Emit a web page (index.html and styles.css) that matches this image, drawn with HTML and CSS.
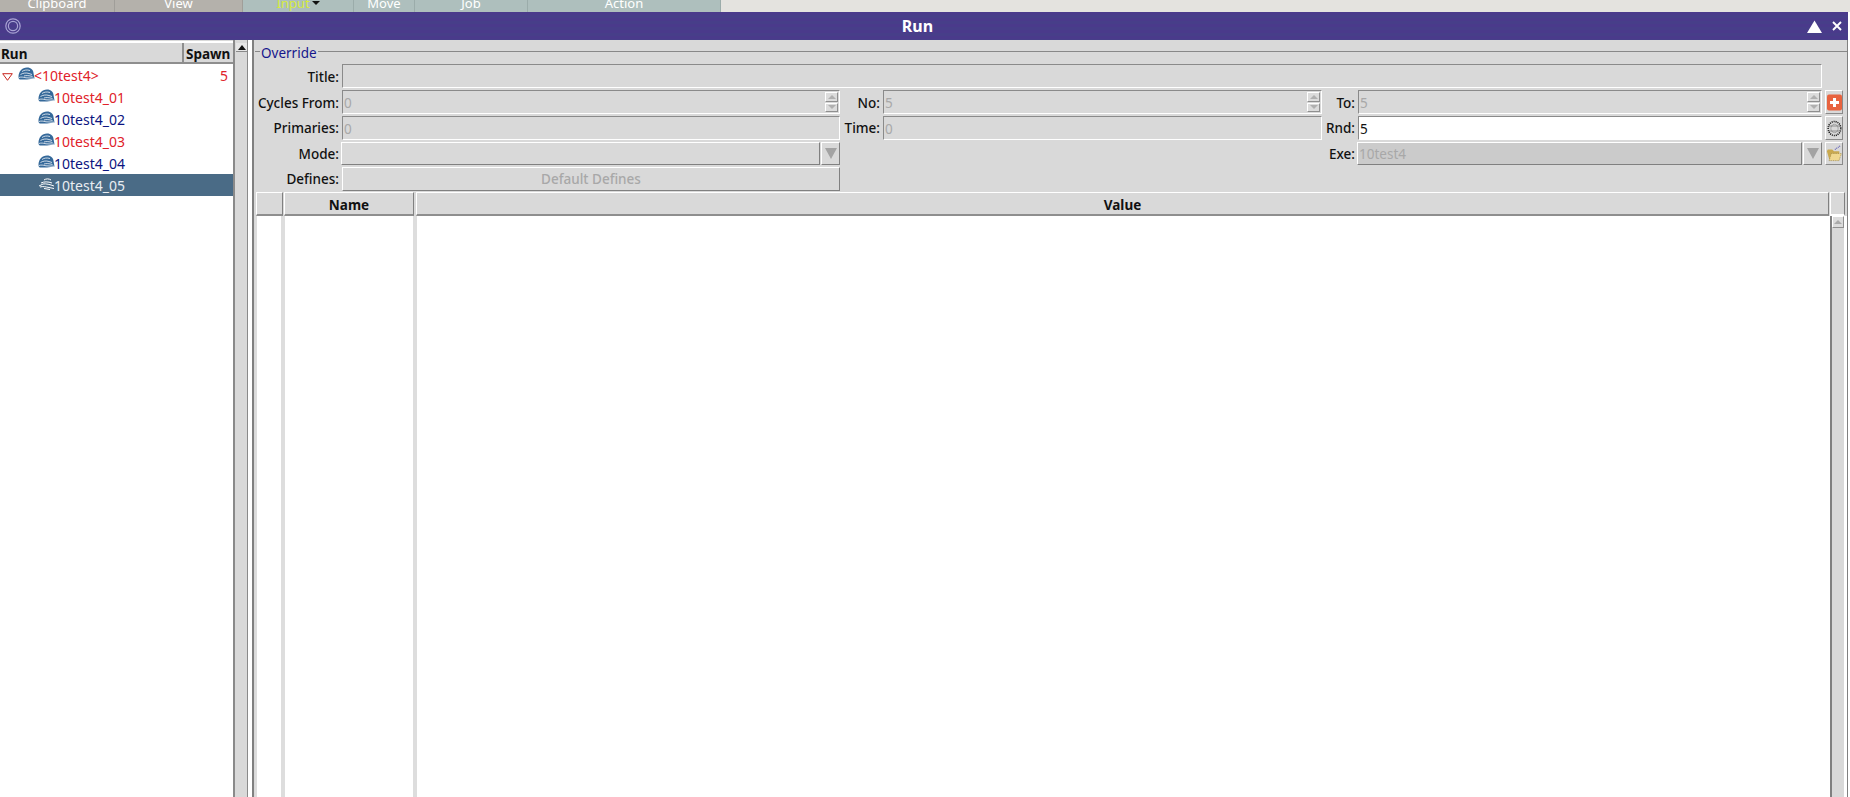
FILE: index.html
```html
<!DOCTYPE html>
<html lang="en">
<head>
<meta charset="utf-8">
<title>Run</title>
<link rel="stylesheet" href="styles.css">
</head>
<body>
<svg class="defs" width="0" height="0" aria-hidden="true">
  <symbol id="brain" viewBox="0 0 17 13">
    <path d="M0.5 10 C0.5 4.5 4 0.5 9 0.5 C13 0.5 15.5 3 15.5 6 L16.5 11.5 L9 12.5 L2 12.5 C1 12.5 0.5 11 0.5 10 Z" fill="currentColor"/>
    <path d="M4 4.5 C6 3 9 2.5 12 3.5 M2.5 7.5 C5 6 8 5.5 11 6.5 L14 7.5 M6 9 C8 8.3 11 8.5 14.5 9.5 M1 10.5 C3 9.8 5 10 8 10.8 L16 11.2" fill="none" stroke="#fff" stroke-width="0.75"/>
  </symbol>
  <symbol id="brain-thin" viewBox="0 0 17 13">
    <path d="M6 3 C8 1.5 11 1.5 13 3 M3 6 C6 4.5 10 4.5 14 6 M1 9 L5 7 C8 6.5 12 7.5 16 9 M2 10 C5 9 8 10 11 10.5 L16 11.5 M6 11.5 L12 12.5" fill="none" stroke="#fff" stroke-width="1"/>
  </symbol>
</svg>

<nav class="tabs">
  <div class="tab tab-clip">Clipboard</div>
  <div class="tab tab-view">View</div>
  <div class="tab tab-input tab-cool"><span class="tab-hot">Input</span><span class="tab-caret"></span></div>
  <div class="tab tab-move tab-cool">Move</div>
  <div class="tab tab-job tab-cool">Job</div>
  <div class="tab tab-action tab-cool">Action</div>
</nav>

<header class="titlebar">
  <svg class="win-icon" width="18" height="18" viewBox="0 0 18 18"><circle cx="9" cy="9" r="7.2" fill="none" stroke="#a9a3d4" stroke-width="1.2"/><circle cx="9" cy="9" r="4.6" fill="none" stroke="#a9a3d4" stroke-width="1.2"/></svg>
  <div class="win-title">Run</div>
  <svg class="win-btn" width="15" height="13" viewBox="0 0 15 13"><path d="M7.5 0.5 L15 13 L0 13 Z" fill="#fff"/></svg>
  <svg class="win-btn win-close" width="10" height="10" viewBox="0 0 10 10"><path d="M1 1 L9 9 M9 1 L1 9" stroke="#fff" stroke-width="1.9"/></svg>
</header>

<main class="main">
  <section class="left">
    <div class="left-head">
      <div class="lh-run">Run</div>
      <div class="lh-spawn">Spawn</div>
    </div>
    <ul class="tree">
      <li class="node root red"><svg class="twisty" width="11" height="8" viewBox="0 0 11 8"><path d="M0.7 0.7 H10.3 L5.5 7.3 Z" fill="#fff" stroke="#c8261f" stroke-width="1"/></svg><svg class="brain"><use href="#brain"/></svg><span class="node-name">&lt;10test4&gt;</span><span class="node-count">5</span></li>
      <li class="node child red"><svg class="brain"><use href="#brain"/></svg><span class="node-name">10test4_01</span></li>
      <li class="node child navy"><svg class="brain"><use href="#brain"/></svg><span class="node-name">10test4_02</span></li>
      <li class="node child red"><svg class="brain"><use href="#brain"/></svg><span class="node-name">10test4_03</span></li>
      <li class="node child navy"><svg class="brain"><use href="#brain"/></svg><span class="node-name">10test4_04</span></li>
      <li class="node child selected"><svg class="brain"><use href="#brain-thin"/></svg><span class="node-name">10test4_05</span></li>
    </ul>
  </section>

  <div class="vscroll-left"><div class="sb-up"><span class="tri-black"></span></div></div>
  <div class="splitter"></div>

  <section class="right">
    <div class="legend"><span class="legend-text">Override</span></div>
    <div class="form">
      <label class="lbl lbl-low">Title:</label>
      <div class="field span-5"></div>
      <div class="blank"></div>

      <label class="lbl lbl-low">Cycles From:</label>
      <div class="field"><span class="val">0</span><span class="spin"><i class="spin-u"></i><i class="spin-d"></i></span></div>
      <label class="lbl lbl-low">No:</label>
      <div class="field"><span class="val">5</span><span class="spin"><i class="spin-u"></i><i class="spin-d"></i></span></div>
      <label class="lbl lbl-low">To:</label>
      <div class="field"><span class="val">5</span><span class="spin"><i class="spin-u"></i><i class="spin-d"></i></span></div>
      <button class="tool"><svg width="15" height="17" viewBox="0 0 15 17"><rect x="0" y="0.5" width="15" height="16" rx="2" fill="#e8633f"/><path d="M7.5 4 V13 M3 8.5 H12" stroke="#fff" stroke-width="3"/></svg></button>

      <label class="lbl">Primaries:</label>
      <div class="field"><span class="val">0</span></div>
      <label class="lbl">Time:</label>
      <div class="field"><span class="val">0</span></div>
      <label class="lbl">Rnd:</label>
      <div class="field field-on"><span class="val val-on">5</span></div>
      <button class="tool"><svg width="15" height="17" viewBox="0 0 15 17"><ellipse cx="7.5" cy="8.5" rx="6.3" ry="7" fill="none" stroke="#111" stroke-width="1.6" stroke-dasharray="1 1"/><ellipse cx="7.5" cy="8.5" rx="3.6" ry="4.2" fill="none" stroke="#777" stroke-width="1" stroke-dasharray="1 1"/><path d="M1.5 6 H13.5 M1.5 11 H13.5" stroke="#444" stroke-width="1" stroke-dasharray="1 1"/></svg></button>

      <label class="lbl">Mode:</label>
      <div class="combo"><div class="combo-box"></div><div class="combo-arrow"><span class="tri-gray"></span></div></div>
      <div class="blank"></div>
      <div class="blank"></div>
      <label class="lbl">Exe:</label>
      <div class="combo"><div class="combo-box combo-dark"><span class="val">10test4</span></div><div class="combo-arrow"><span class="tri-gray"></span></div></div>
      <button class="tool"><svg width="18" height="19" viewBox="0 0 18 19"><path d="M1 7 L2 5 H7 L9 7 H15 V17 H4 Z" fill="#c9a94f"/><path d="M3.5 17.5 L6 9.5 H17.5 L14.5 17.5 Z" fill="#f0d88f" stroke="#8f7b3c" stroke-width="0.7" stroke-dasharray="1 1"/><path d="M10 5 L16 1" stroke="#5454b4" stroke-width="1.2" stroke-dasharray="1 1"/></svg></button>

      <label class="lbl">Defines:</label>
      <button class="wide-btn">Default Defines</button>
    </div>

    <div class="table">
      <div class="thead">
        <div class="th th-0"></div>
        <div class="th th-name">Name</div>
        <div class="th th-value">Value</div>
        <div class="th th-corner"></div>
      </div>
      <div class="tbody">
        <div class="col col-0"></div>
        <div class="col col-name"></div>
        <div class="col col-value"></div>
        <div class="vscroll-right"><div class="sb-up-r"><span class="tri-small"></span></div></div>
      </div>
    </div>
  </section>
</main>
</body>
</html>
```

FILE: styles.css
```css
* { box-sizing: border-box; }
html, body { margin: 0; padding: 0; height: 100%; }
body {
  width: 1850px; height: 797px; overflow: hidden; background: #fff;
  display: flex; flex-direction: column;
  font-family: "Noto Sans", sans-serif; font-size: 13px; color: #111;
}
.defs { position: absolute; }

/* top tabs */
.tabs { height: 12px; flex: none; display: flex; background: #e4e3df; overflow: hidden; color: #fff; }
.tab { height: 12px; display: flex; justify-content: center; align-items: flex-end; line-height: 18px; overflow: hidden; background: #b4b1ab; border-right: 1px solid #a09e99; }
.tab-cool { background: #aebfbd; border-right-color: #9bacaa; }
.tab-clip { width: 115px; }
.tab-view { width: 128px; }
.tab-input { width: 111px; }
.tab-move { width: 61px; }
.tab-job { width: 113px; }
.tab-action { width: 193px; }
.tab-hot { color: #d6ec3c; }
.tab-caret { width: 0; height: 0; margin: 0 0 7px 2px; border: 4px solid transparent; border-top: 4px solid #111; border-bottom: 0; align-self: flex-end; }

/* title bar */
.titlebar {
  width: 1848px; height: 28px; flex: none; display: flex; align-items: center; padding: 0 5px 0 5px;
  background: repeating-linear-gradient(180deg, #4a3a8b 0, #4a3a8b 3px, #473e89 3px, #473e89 6px);
}
.win-icon { flex: none; margin-left: -1px; }
.win-title { flex: 1; text-align: center; color: #fff; font-weight: 700; font-size: 16px; padding-left: 6px; }
.win-btn { flex: none; }
.win-close { margin-left: 10px; margin-right: 1px; }

/* body */
.main { flex: 1; width: 1848px; min-height: 0; display: flex; background: #d9d9d9; }

.left { width: 233px; flex: none; background: #fff; display: flex; flex-direction: column; border-top: 1px solid #d9d9d9; }
.left-head { height: 23px; flex: none; display: flex; background: #d9d9d9; border-top: 2px solid #fff; border-bottom: 2px solid #8e8e8e; font-weight: 700; font-size: 13.5px; line-height: 22px; }
.lh-run { flex: 1; padding-left: 1px; border-right: 2px solid #8e8e8e; }
.lh-spawn { width: 49px; padding-left: 2px; white-space: nowrap; overflow: hidden; }
.tree { list-style: none; margin: 0; padding: 0; font-size: 14px; }
.node { height: 22px; display: flex; align-items: center; }
.root { padding-left: 2px; }
.child { padding-left: 38px; }
.twisty { margin-right: 5px; margin-top: 3px; }
.brain { width: 17px; height: 13px; flex: none; color: #35699a; margin-top: -3px; margin-right: -1px; }
.node-name { flex: 1; }
.node-count { padding-right: 5px; }
.red { color: #e0222a; }
.navy { color: #0c1480; }
.selected { background: #4a6b86; color: #e9eef2; }

.vscroll-left { width: 15px; flex: none; background: #d9d9d9; border-left: 2px solid #8a8a8a; border-right: 1px solid #8a8a8a; padding-top: 3px; }
.sb-up { height: 9px; margin: 0 0 0 1px; display: flex; justify-content: center; align-items: center; border-bottom: 1px solid #8a8a8a; background: #e6e6e6; }
.tri-black { width: 0; height: 0; border: 4px solid transparent; border-top: 0; border-bottom: 5px solid #111; }
.splitter { width: 4px; flex: none; background: #fff; }

.right { flex: 1; min-width: 0; display: flex; flex-direction: column; background: #d9d9d9; border-left: 2px solid #808080; border-right: 1px solid #808080; padding-left: 1px; }
.legend { height: 24px; flex: none; display: flex; align-items: flex-start; }
.legend::before { content: ""; width: 5px; margin-top: 11px; height: 1px; background: #888; flex: none; }
.legend::after { content: ""; flex: 1; margin-top: 11px; height: 1px; background: #888; }
.legend-text { color: #16168c; font-size: 13.5px; line-height: 26px; height: 24px; padding: 0 1px; }

.form {
  flex: none; display: grid; padding-bottom: 1px;
  grid-template-columns: 87px 498px 43px 439px 36px 464px 21px;
  grid-template-rows: 24px 24px 24px 23px 24px; row-gap: 2px;
}
.lbl { text-align: right; padding-right: 3px; line-height: 25px; font-weight: 500; white-space: nowrap; font-size: 13.5px; }
.lbl-low { line-height: 27px; }
.field { display: flex; align-items: center; background: #d9d9d9; border: 1px solid #fff; border-top: 1px solid #8a8a8a; border-left: 1px solid #8a8a8a; }
.field-on { background: #fff; }
.span-5 { grid-column: span 5; }
.val { flex: 1; padding: 1px 0 0 1px; color: #a8a8a8; font-size: 13.5px; }
.val-on { color: #111; }
.spin { width: 13px; height: 20px; margin-right: 1px; display: flex; flex-direction: column; gap: 1px; flex: none; }
.spin i { flex: 1; display: flex; justify-content: center; align-items: center; background: #dcdcdc; border: 1px solid #fff; border-right-color: #8f8f8f; border-bottom-color: #8f8f8f; }
.spin-u::before { content: ""; border: 4px solid transparent; border-top: 0; border-bottom: 4px solid #b0b0b0; }
.spin-d::before { content: ""; border: 4px solid transparent; border-bottom: 0; border-top: 4px solid #b0b0b0; }
.tool { margin: 0 0 0 3px; padding: 0; display: flex; align-items: center; justify-content: center; background: #d9d9d9; border: 1px solid #fff; border-right-color: #8a8a8a; border-bottom-color: #8a8a8a; }
.combo { display: flex; gap: 1px; margin-left: -1px; }
.combo-box { flex: 1; display: flex; align-items: center; background: #d9d9d9; border: 1px solid #fff; border-right-color: #808080; border-bottom-color: #808080; }
.combo-dark { background: #cbcbcb; }
.combo-arrow { width: 19px; flex: none; display: flex; align-items: center; justify-content: center; background: #d9d9d9; border: 1px solid #fff; border-right-color: #808080; border-bottom-color: #808080; }
.tri-gray { width: 0; height: 0; border: 6px solid transparent; border-bottom: 0; border-top: 11px solid #a3a3a3; }
.wide-btn { margin: 0; padding: 0; font: inherit; font-size: 13.5px; font-weight: 500; color: #a8a8a8; background: #d9d9d9; border: 1px solid #fff; border-right-color: #808080; border-bottom-color: #808080; }

.table { flex: 1; min-height: 0; display: flex; flex-direction: column; }
.thead { height: 24px; flex: none; display: flex; font-weight: 700; font-size: 13.5px; line-height: 24px; text-align: center; }
.th { background: #d9d9d9; border: 1px solid #fff; border-right-color: #808080; border-bottom: 2px solid #8e8e8e; }
.th-0 { width: 27px; margin-left: 1px; }
.th-name { width: 130px; margin-left: 1px; }
.th-value { width: 1413px; margin-left: 2px; }
.th-corner { width: 15px; margin-left: 1px; border-bottom-color: #fff; }
.tbody { flex: 1; min-height: 0; display: flex; }
.col { background: #fff; }
.col-0 { width: 30px; border-left: 2px solid #ddd; border-right: 4px solid #ddd; }
.col-name { width: 132px; border-right: 4px solid #ddd; }
.col-value { width: 1413px; }
.vscroll-right { flex: 1; background: #d9d9d9; border-left: 2px solid #808080; border-right: 3px solid #fff; }
.sb-up-r { height: 12px; background: #dcdcdc; border: 1px solid #fff; border-right-color: #8f8f8f; border-bottom-color: #8f8f8f; display: flex; align-items: center; justify-content: center; }
.tri-small { border: 4px solid transparent; border-top: 0; border-bottom: 4px solid #aaa; }
```
